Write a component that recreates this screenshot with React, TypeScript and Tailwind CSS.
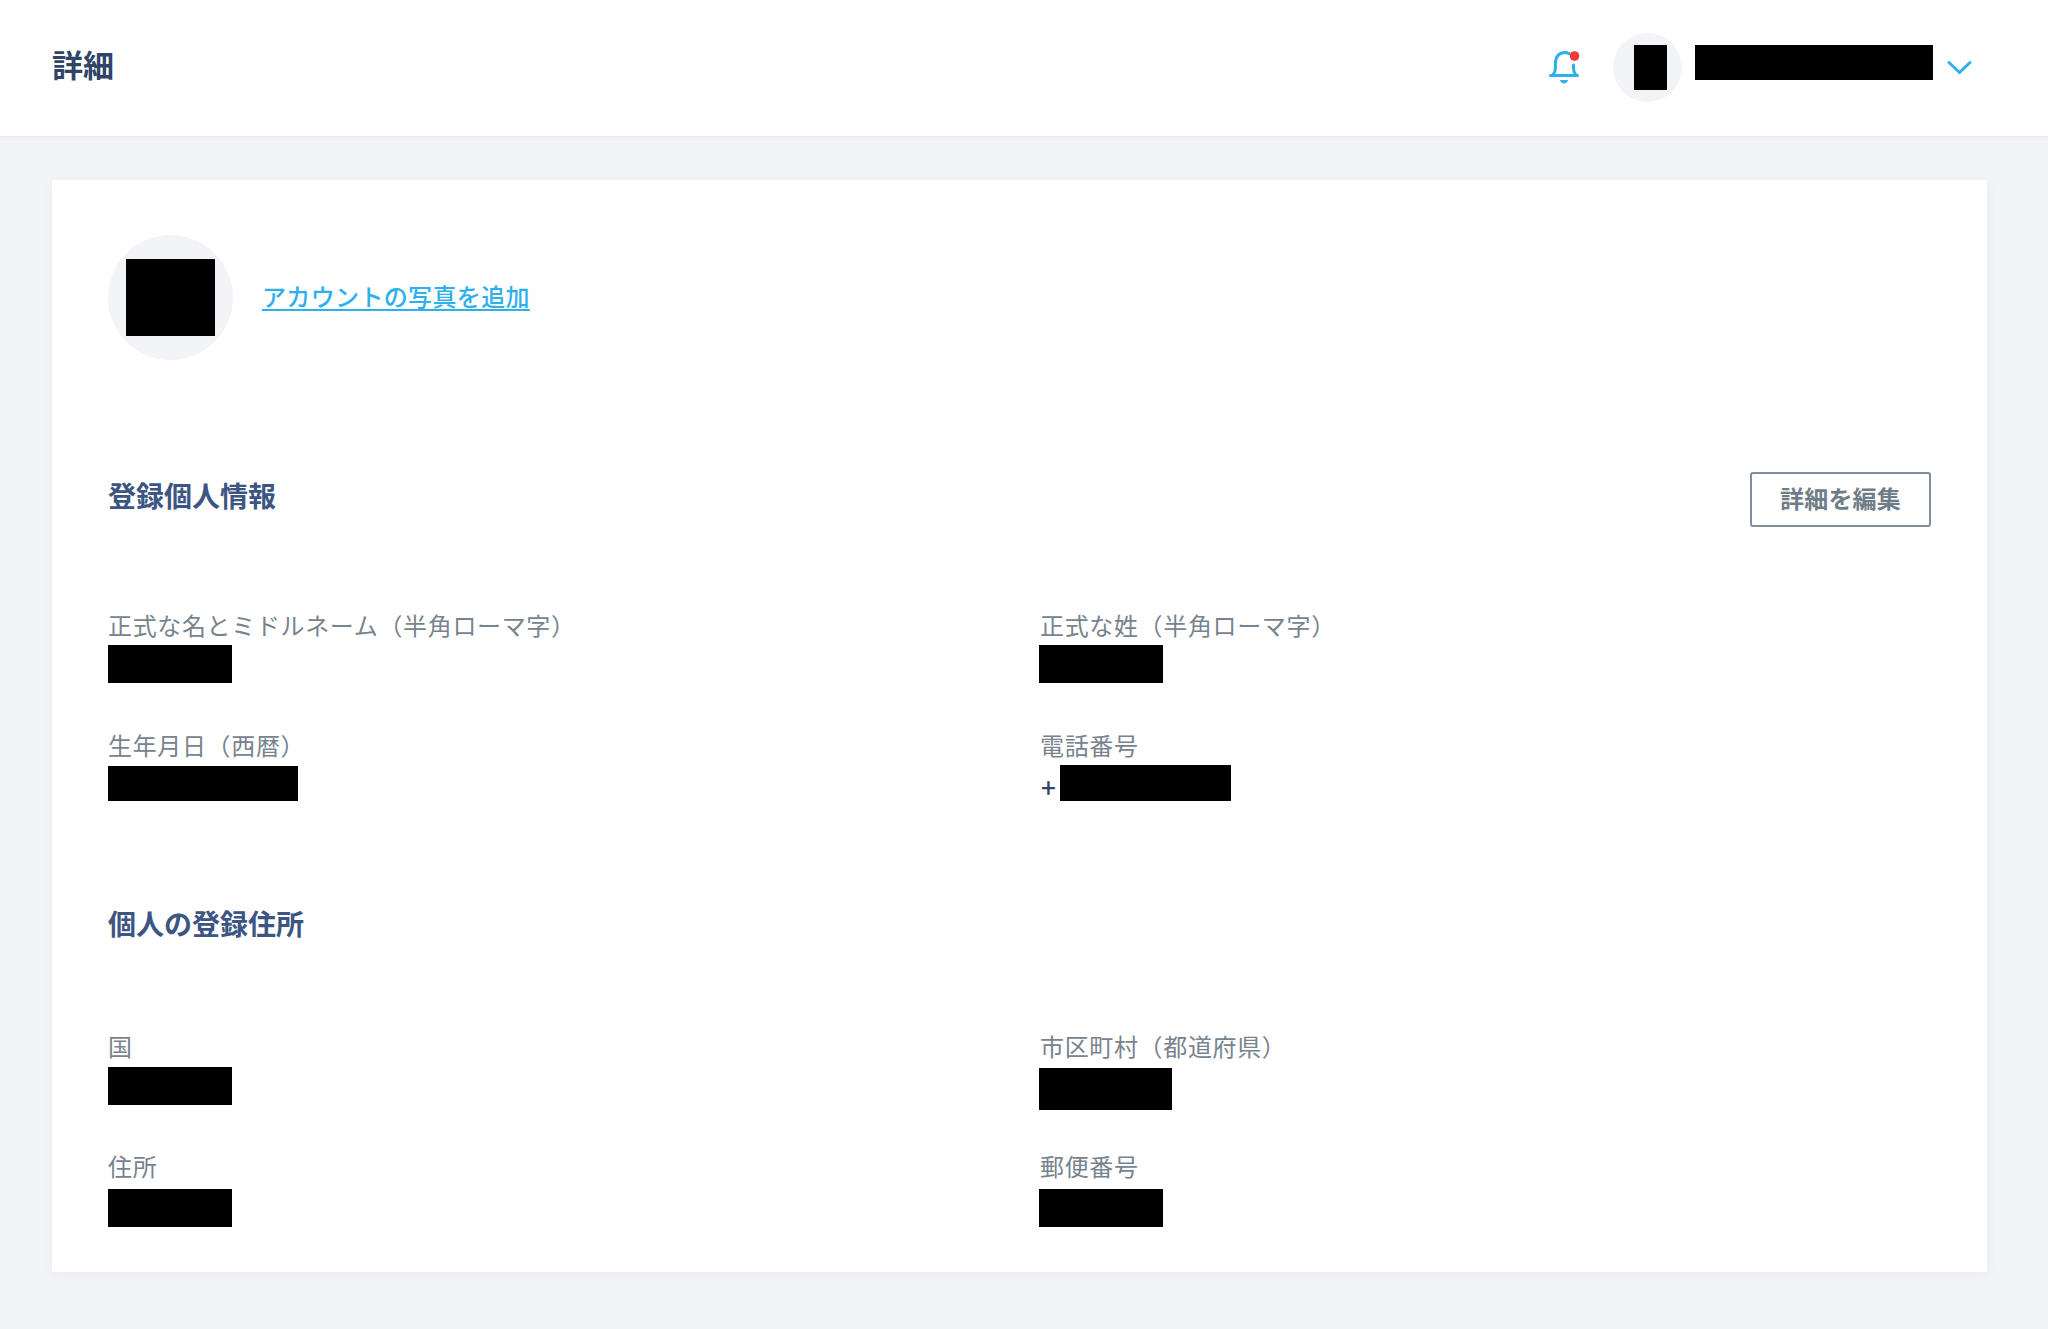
const sans = "font-['Noto_Sans_CJK_JP','Noto_Sans',sans-serif]";

function Redacted({ className }: { className: string }) {
  return <div className={`bg-black ${className}`} />;
}

function Field({
  label,
  right,
  children,
}: {
  label: string;
  right?: boolean;
  children: React.ReactNode;
}) {
  return (
    <div className="h-[120px]">
      <div className={`-mt-[1px] text-[24px] leading-[36px] tracking-[0.65px] text-[#77838e] ${right ? "ml-[1px]" : ""}`}>
        {label}
      </div>
      {children}
    </div>
  );
}

function BellIcon() {
  return (
    <svg className="w-[32px] h-[38px]" viewBox="0 0 32 38" fill="none">
      <path
        d="M5.500 26c1.500-1.600 1.900-3.400 1.900-6v-4.500C7.400 9 11 4.400 16.500 4.400c1.700 0 3.200.4 4.500 1.200"
        stroke="#2eb0ee"
        strokeWidth="3"
        strokeLinecap="round"
      />
      <path
        d="M25.500 17v3c0 2.600.4 4.400 1.900 6"
        stroke="#2eb0ee"
        strokeWidth="3"
        strokeLinecap="round"
      />
      <path d="M2.500 27.500h27" stroke="#2eb0ee" strokeWidth="3" strokeLinecap="round" />
      <path d="M12 32h8c-.4 2.200-1.900 3.400-4 3.400s-3.600-1.200-4-3.400z" fill="#2eb0ee" />
      <circle cx="26.500" cy="8" r="4.800" fill="#ef3a3a" />
    </svg>
  );
}

export default function App() {
  return (
    <div className={`min-h-screen bg-[#f3f4f8] ${sans}`}>
      <header className="h-[137px] pb-[2px] bg-white border-b border-[#e9eaef] shadow-[0_2px_4px_rgba(40,50,80,0.04)] flex items-center pl-[52px] pr-[76px]">
        <h1 className="-mt-[7px] text-[31px] leading-[40px] font-bold text-[#2f4468]">詳細</h1>
        <div className="ml-auto flex items-center">
          <BellIcon />
          <div className="ml-[33px] w-[69px] h-[69px] rounded-full bg-[#f3f4f8] flex items-center justify-center pl-[5px]">
            <Redacted className="w-[33px] h-[45px]" />
          </div>
          <Redacted className="ml-[13px] w-[238px] h-[35px] -mt-[9px]" />
          <svg className="ml-[14px] w-[25px] h-[15px]" viewBox="0 0 25 15" fill="none">
            <path d="M2 2.500l10.500 10L23 2.500" stroke="#2eb0ee" strokeWidth="3" strokeLinecap="round" />
          </svg>
        </div>
      </header>

      <main className="pt-[43px] pl-[52px]">
        <div className="w-[1935px] h-[1092px] bg-white rounded-[2px] shadow-[0_2px_12px_rgba(40,50,80,0.05)] pt-[55px] px-[56px]">
          <div className="flex items-center">
            <div className="w-[125px] h-[125px] rounded-full bg-[#f3f4f8] flex items-center justify-center">
              <Redacted className="w-[89px] h-[77px]" />
            </div>
            <a href="#" className="ml-[29px] -mt-[4px] text-[24px] leading-[36px] tracking-[0.35px] font-medium text-[#2eb0ee] underline underline-offset-[3px]">
              アカウントの写真を追加
            </a>
          </div>

          <div className="mt-[112px] flex items-start justify-between">
            <h2 className="mt-[2px] text-[28px] leading-[42px] font-bold text-[#3d5583]">登録個人情報</h2>
            <button className="w-[181px] h-[55px] border-2 border-[#7f8e9a] rounded-[3px] pb-[4px] text-[24px] tracking-[0.2px] font-bold text-[#6f7d88]">
              詳細を編集
            </button>
          </div>

          <div className="mt-[81px] grid grid-cols-[931px_1fr]">
            <Field label="正式な名とミドルネーム（半角ローマ字）">
              <Redacted className="mt-[2px] w-[124px] h-[38px]" />
            </Field>
            <Field right label="正式な姓（半角ローマ字）">
              <Redacted className="mt-[2px] w-[124px] h-[38px]" />
            </Field>
            <Field label="生年月日（西暦）">
              <Redacted className="mt-[3px] w-[190px] h-[35px]" />
            </Field>
            <Field right label="電話番号">
              <div className="mt-[2px] flex h-[36px]">
                <span className="w-[21px] h-[36px] pl-[2px] text-[26px] leading-[44px] font-medium text-[#2f4468]">+</span>
                <Redacted className="w-[171px] h-[36px]" />
              </div>
            </Field>
          </div>

          <h2 className="mt-[54px] text-[28px] leading-[42px] font-bold text-[#3d5583]">個人の登録住所</h2>

          <div className="mt-[85px] grid grid-cols-[931px_1fr]">
            <Field label="国">
              <Redacted className="mt-[3px] w-[124px] h-[38px]" />
            </Field>
            <Field right label="市区町村（都道府県）">
              <Redacted className="mt-[4px] w-[133px] h-[42px]" />
            </Field>
            <Field label="住所">
              <Redacted className="mt-[5px] w-[124px] h-[38px]" />
            </Field>
            <Field right label="郵便番号">
              <Redacted className="mt-[5px] w-[124px] h-[38px]" />
            </Field>
          </div>
        </div>
      </main>
    </div>
  );
}
